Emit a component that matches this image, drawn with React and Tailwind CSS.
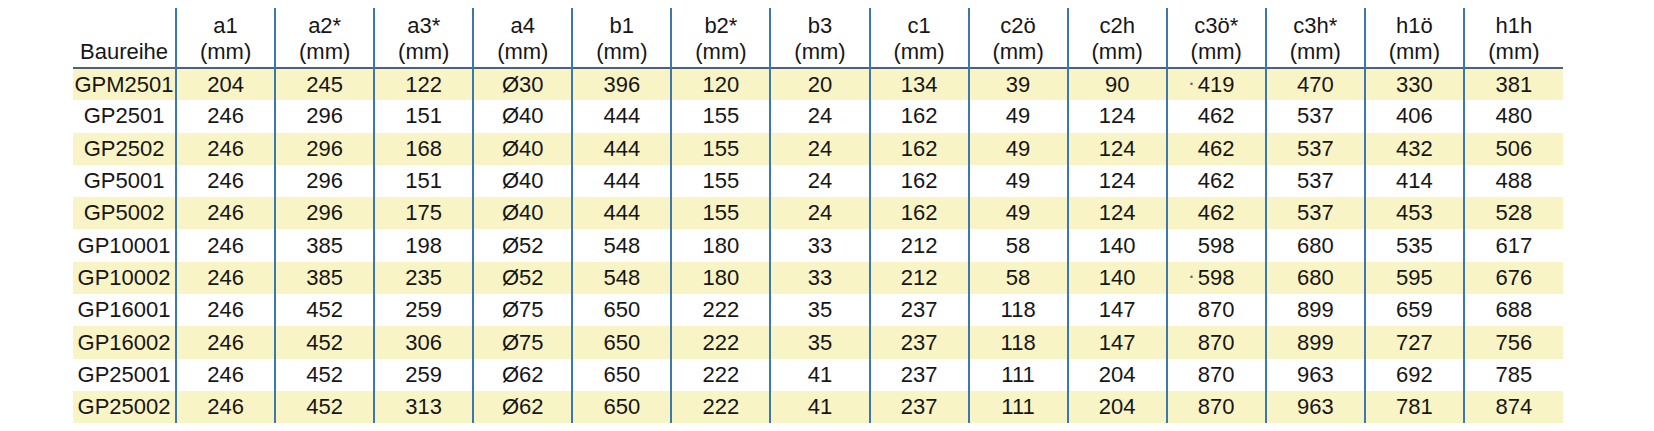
const columns = [
  'a1', 'a2*', 'a3*', 'a4', 'b1', 'b2*', 'b3', 'c1', 'c2ö', 'c2h', 'c3ö*', 'c3h*', 'h1ö', 'h1h',
];

const rows = [
  ['GPM2501', '204', '245', '122', 'Ø30', '396', '120', '20', '134', '39', '90', '·419', '470', '330', '381'],
  ['GP2501', '246', '296', '151', 'Ø40', '444', '155', '24', '162', '49', '124', '462', '537', '406', '480'],
  ['GP2502', '246', '296', '168', 'Ø40', '444', '155', '24', '162', '49', '124', '462', '537', '432', '506'],
  ['GP5001', '246', '296', '151', 'Ø40', '444', '155', '24', '162', '49', '124', '462', '537', '414', '488'],
  ['GP5002', '246', '296', '175', 'Ø40', '444', '155', '24', '162', '49', '124', '462', '537', '453', '528'],
  ['GP10001', '246', '385', '198', 'Ø52', '548', '180', '33', '212', '58', '140', '598', '680', '535', '617'],
  ['GP10002', '246', '385', '235', 'Ø52', '548', '180', '33', '212', '58', '140', '·598', '680', '595', '676'],
  ['GP16001', '246', '452', '259', 'Ø75', '650', '222', '35', '237', '118', '147', '870', '899', '659', '688'],
  ['GP16002', '246', '452', '306', 'Ø75', '650', '222', '35', '237', '118', '147', '870', '899', '727', '756'],
  ['GP25001', '246', '452', '259', 'Ø62', '650', '222', '41', '237', '111', '204', '870', '963', '692', '785'],
  ['GP25002', '246', '452', '313', 'Ø62', '650', '222', '41', '237', '111', '204', '870', '963', '781', '874'],
];

function Cell({ value }) {
  // scan speck before a few values in the original sheet
  if (value.startsWith('·')) {
    return (
      <span className="relative">
        <span className="absolute -left-[10px] top-0 text-[#666]">·</span>
        {value.slice(1)}
      </span>
    );
  }
  return value;
}

export default function App() {
  return (
    <div className="w-[1654px] h-[431px] bg-white pt-[8px] pl-[73px] font-['Liberation_Sans',Arial,sans-serif] text-[22px] text-[#161616]">
      <table className="table-fixed border-collapse w-[1490px]">
        <colgroup>
          <col className="w-[103px]" />
          {columns.map((c) => (
            <col key={c} className="w-[99px]" />
          ))}
        </colgroup>
        <thead>
          <tr className="h-[60px] border-b-2 border-[#4b6279]">
            <th className="align-bottom pb-[2px] leading-[26px] font-normal text-center">Baureihe</th>
            {columns.map((c) => (
              <th
                key={c}
                className="align-bottom pb-[2px] leading-[26px] font-normal text-center border-l-2 border-[#3c78aa]"
              >
                <div>{c}</div>
                <div>(mm)</div>
              </th>
            ))}
          </tr>
        </thead>
        <tbody>
          {rows.map((row, i) => (
            <tr key={row[0]} className={`h-[32.3px] ${i % 2 === 0 ? 'bg-[#f9f4c6]' : 'bg-white'}`}>
              {row.map((v, j) => (
                <td
                  key={j}
                  className={`p-0 leading-none text-center ${j > 0 ? 'border-l-2 border-[#3c78aa]' : ''}`}
                >
                  <Cell value={v} />
                </td>
              ))}
            </tr>
          ))}
        </tbody>
      </table>
    </div>
  );
}
